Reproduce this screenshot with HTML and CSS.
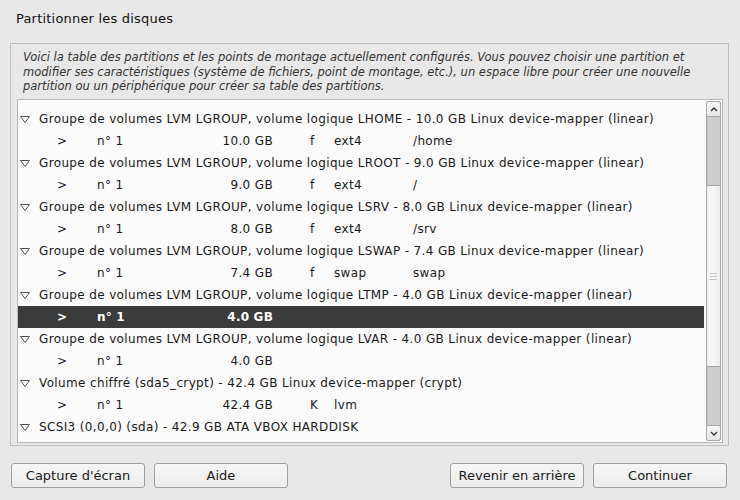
FILE: index.html
```html
<!DOCTYPE html>
<html lang="fr">
<head>
<meta charset="utf-8">
<title>Partitionner les disques</title>
<link rel="stylesheet" href="styles.css">
</head>
<body>
<div class="page">
  <h1 class="title">Partitionner les disques</h1>
  <div class="frame">
    <p class="desc">Voici la table des partitions et les points de montage actuellement configurés. Vous pouvez choisir une partition et modifier ses caractéristiques (système de fichiers, point de montage, etc.), un espace libre pour créer une nouvelle partition ou un périphérique pour créer sa table des partitions.</p>
    <div class="list">
      <div class="rows">
        <div class="row group"><svg class="tri" width="10" height="7" viewBox="0 0 10 7"><polygon points="0.5,0.5 9.5,0.5 5,6.5" fill="none" stroke="#555" stroke-width="1"/></svg><span>Groupe de volumes LVM LGROUP, volume logique LHOME - 10.0 GB Linux device-mapper (linear)</span></div>
        <div class="row part"><span class="c-arrow">&gt;</span><span class="c-num">n° 1</span><span class="c-size">10.0 GB</span><span class="c-flag">f</span><span class="c-fs">ext4</span><span class="c-mnt">/home</span></div>
        <div class="row group"><svg class="tri" width="10" height="7" viewBox="0 0 10 7"><polygon points="0.5,0.5 9.5,0.5 5,6.5" fill="none" stroke="#555" stroke-width="1"/></svg><span>Groupe de volumes LVM LGROUP, volume logique LROOT - 9.0 GB Linux device-mapper (linear)</span></div>
        <div class="row part"><span class="c-arrow">&gt;</span><span class="c-num">n° 1</span><span class="c-size">9.0 GB</span><span class="c-flag">f</span><span class="c-fs">ext4</span><span class="c-mnt">/</span></div>
        <div class="row group"><svg class="tri" width="10" height="7" viewBox="0 0 10 7"><polygon points="0.5,0.5 9.5,0.5 5,6.5" fill="none" stroke="#555" stroke-width="1"/></svg><span>Groupe de volumes LVM LGROUP, volume logique LSRV - 8.0 GB Linux device-mapper (linear)</span></div>
        <div class="row part"><span class="c-arrow">&gt;</span><span class="c-num">n° 1</span><span class="c-size">8.0 GB</span><span class="c-flag">f</span><span class="c-fs">ext4</span><span class="c-mnt">/srv</span></div>
        <div class="row group"><svg class="tri" width="10" height="7" viewBox="0 0 10 7"><polygon points="0.5,0.5 9.5,0.5 5,6.5" fill="none" stroke="#555" stroke-width="1"/></svg><span>Groupe de volumes LVM LGROUP, volume logique LSWAP - 7.4 GB Linux device-mapper (linear)</span></div>
        <div class="row part"><span class="c-arrow">&gt;</span><span class="c-num">n° 1</span><span class="c-size">7.4 GB</span><span class="c-flag">f</span><span class="c-fs">swap</span><span class="c-mnt">swap</span></div>
        <div class="row group"><svg class="tri" width="10" height="7" viewBox="0 0 10 7"><polygon points="0.5,0.5 9.5,0.5 5,6.5" fill="none" stroke="#555" stroke-width="1"/></svg><span>Groupe de volumes LVM LGROUP, volume logique LTMP - 4.0 GB Linux device-mapper (linear)</span></div>
        <div class="row part selected"><span class="c-arrow">&gt;</span><span class="c-num">n° 1</span><span class="c-size">4.0 GB</span><span class="c-flag"></span><span class="c-fs"></span><span class="c-mnt"></span></div>
        <div class="row group"><svg class="tri" width="10" height="7" viewBox="0 0 10 7"><polygon points="0.5,0.5 9.5,0.5 5,6.5" fill="none" stroke="#555" stroke-width="1"/></svg><span>Groupe de volumes LVM LGROUP, volume logique LVAR - 4.0 GB Linux device-mapper (linear)</span></div>
        <div class="row part"><span class="c-arrow">&gt;</span><span class="c-num">n° 1</span><span class="c-size">4.0 GB</span><span class="c-flag"></span><span class="c-fs"></span><span class="c-mnt"></span></div>
        <div class="row group"><svg class="tri" width="10" height="7" viewBox="0 0 10 7"><polygon points="0.5,0.5 9.5,0.5 5,6.5" fill="none" stroke="#555" stroke-width="1"/></svg><span>Volume chiffré (sda5_crypt) - 42.4 GB Linux device-mapper (crypt)</span></div>
        <div class="row part"><span class="c-arrow">&gt;</span><span class="c-num">n° 1</span><span class="c-size">42.4 GB</span><span class="c-flag">K</span><span class="c-fs">lvm</span><span class="c-mnt"></span></div>
        <div class="row group"><svg class="tri" width="10" height="7" viewBox="0 0 10 7"><polygon points="0.5,0.5 9.5,0.5 5,6.5" fill="none" stroke="#555" stroke-width="1"/></svg><span>SCSI3 (0,0,0) (sda) - 42.9 GB ATA VBOX HARDDISK</span></div>
      </div>
      <div class="scrollbar">
        <div class="sb-btn"><svg width="8" height="5" viewBox="0 0 8 5"><polyline points="1,4 4,1 7,4" fill="none" stroke="#333" stroke-width="1.3"/></svg></div>
        <div class="sb-track top"></div>
        <div class="sb-thumb"><span class="grip"></span></div>
        <div class="sb-track bottom"></div>
        <div class="sb-btn"><svg width="8" height="5" viewBox="0 0 8 5"><polyline points="1,1 4,4 7,1" fill="none" stroke="#333" stroke-width="1.3"/></svg></div>
      </div>
    </div>
  </div>
  <div class="buttons">
    <div class="btn-group">
      <button class="btn">Capture d'écran</button>
      <button class="btn">Aide</button>
    </div>
    <div class="btn-group right">
      <button class="btn">Revenir en arrière</button>
      <button class="btn">Continuer</button>
    </div>
  </div>
</div>
</body>
</html>
```

FILE: styles.css
```css
* { box-sizing: border-box; }

html, body {
  margin: 0;
  padding: 0;
  background: #e8e8e8;
}

body {
  font-family: "DejaVu Sans", Verdana, sans-serif;
  font-size: 12px;
  color: #1a1a1a;
  width: 740px;
  height: 500px;
  overflow: hidden;
}

.page {
  padding: 11px 11px 0 10px;
}

.title {
  margin: 0 0 0 6px;
  font-size: 13px;
  letter-spacing: 0.2px;
  font-weight: normal;
  line-height: 16px;
  color: #111;
}

.frame {
  margin-top: 16px;
  border: 1px solid #bebebe;
  padding: 6px 5px 1px 6px;
  height: 403px;
}

.desc {
  margin: 0 0 0 6px;
  font-style: italic;
  font-size: 11.5px;
  line-height: 14.5px;
  height: 44px;
  color: #333;
}

.list {
  margin-top: 5px;
  height: 344px;
  border: 1px solid #b8b8b8;
  background: #fbfbfb;
  display: flex;
  padding: 1px 1px 1px 0;
}

.rows {
  flex: 1;
  padding-top: 7px;
  overflow: hidden;
}

.row {
  height: 22px;
  display: flex;
  align-items: center;
  white-space: nowrap;
  color: #1a1a1a;
  letter-spacing: 0.36px;
}

.group {
  padding-left: 2px;
}

.tri {
  flex: none;
  margin-right: 9px;
}

.part {
  padding-left: 39px;
}

.part span { flex: none; }

.c-arrow { width: 40px; }
.c-num { width: 101px; }
.c-size { width: 75px; text-align: right; }
.c-flag { width: 61px; padding-left: 37px; }
.c-fs { width: 79px; }
.c-mnt { width: 80px; }

.selected {
  background: #3b3b3b;
  color: #fff;
  font-weight: bold;
  letter-spacing: 0.2px;
}

.scrollbar {
  width: 15px;
  margin-left: 2px;
  display: flex;
  flex-direction: column;
  border: 1px solid #a9a9a9;
  border-radius: 2px;
  background: #cfcfcf;
}

.sb-btn {
  height: 14px;
  flex: none;
  display: flex;
  align-items: center;
  justify-content: center;
  background: linear-gradient(#f6f6f6, #e6e6e6);
  border-radius: 2px;
}

.sb-track {
  background: #cdcdcd;
  border-left: 1px solid #bcbcbc;
}

.sb-track.top { height: 69px; border-top: 1px solid #a9a9a9; }
.sb-track.bottom { flex: 1; border-bottom: 1px solid #a9a9a9; }

.sb-thumb {
  height: 182px;
  background: linear-gradient(90deg, #f0f0f0, #f7f7f7 50%, #eaeaea);
  border-top: 1px solid #a5a5a5;
  border-bottom: 1px solid #a5a5a5;
  display: flex;
  align-items: center;
  justify-content: center;
}

.grip {
  width: 7px;
  height: 7px;
  border-top: 1px solid #c4c4c4;
  border-bottom: 1px solid #c4c4c4;
  background: linear-gradient(#c4c4c4, #c4c4c4) center / 100% 1px no-repeat;
}

.buttons {
  margin-top: 17px;
  display: flex;
  justify-content: space-between;
}

.btn-group {
  display: flex;
  gap: 9px;
}

.btn-group:first-child { margin-left: 1px; }
.btn-group.right { margin-right: 2px; }

.btn {
  width: 134px;
  height: 25px;
  font-family: "DejaVu Sans", Verdana, sans-serif;
  font-size: 13px;
  color: #1a1a1a;
  border: 1px solid #9f9f9f;
  border-radius: 3px;
  background: linear-gradient(#f7f7f7, #ebebeb);
  padding: 0;
}
```
